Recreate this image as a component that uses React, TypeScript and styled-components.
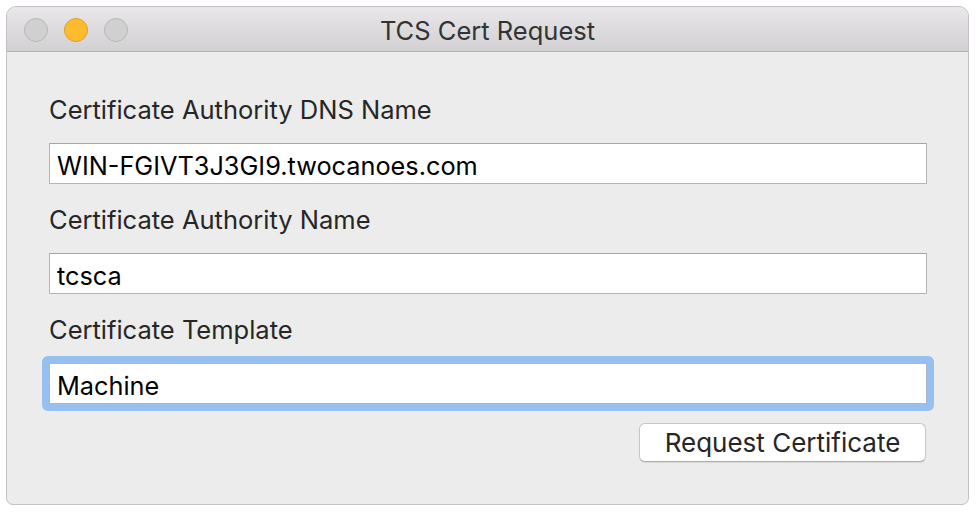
import React from "react";
import styled, { createGlobalStyle } from "styled-components";

const GlobalStyle = createGlobalStyle`
  html, body {
    margin: 0;
    padding: 0;
    background: #ffffff;
  }
  body {
    font-family: Inter, "Liberation Sans", sans-serif;
    -webkit-font-smoothing: antialiased;
  }
`;

interface FieldProps {
  label: string;
  value: string;
  focused?: boolean;
}

const Field: React.FC<FieldProps> = ({ label, value, focused }) => (
  <FieldGroup>
    <Label>{label}</Label>
    <FocusRing $focused={!!focused}>
      <TextInput defaultValue={value} $focused={!!focused} />
    </FocusRing>
  </FieldGroup>
);

export default function App() {
  return (
    <>
      <GlobalStyle />
      <Page>
        <Window>
          <TitleBar>
            <Lights>
              <Light $color="idle" />
              <Light $color="yellow" />
              <Light $color="idle" />
            </Lights>
            <Title>TCS Cert Request</Title>
          </TitleBar>

          <Content>
            <Field label="Certificate Authority DNS Name" value="WIN-FGIVT3J3GI9.twocanoes.com" />
            <Field label="Certificate Authority Name" value="tcsca" />
            <Field label="Certificate Template" value="Machine" focused />

            <ButtonRow>
              <PushButton>Request Certificate</PushButton>
            </ButtonRow>
          </Content>
        </Window>
      </Page>
    </>
  );
}

const Page = styled.div`
  width: 976px;
  height: 512px;
  padding: 6px 0 0 6px;
  box-sizing: border-box;
`;

const Window = styled.div`
  width: 963px;
  height: 499px;
  box-sizing: border-box;
  border: 1px solid #c2c2c2;
  border-radius: 10px 10px 7px 7px;
  background: #ececec;
  overflow: hidden;
  display: flex;
  flex-direction: column;
`;

const TitleBar = styled.div`
  position: relative;
  height: 44px;
  flex-shrink: 0;
  display: flex;
  align-items: center;
  justify-content: center;
  background: linear-gradient(#e9e7e9, #d2d0d2);
  border-bottom: 1px solid #b1b1b1;
`;

const Lights = styled.div`
  position: absolute;
  left: 17px;
  top: 11px;
  display: flex;
  gap: 16px;
`;

const Light = styled.span<{ $color: "idle" | "yellow" }>`
  width: 24px;
  height: 24px;
  border-radius: 50%;
  box-sizing: border-box;
  background: ${({ $color }) => ($color === "yellow" ? "#fdbb2e" : "#d1d0d1")};
  border: 1px solid ${({ $color }) => ($color === "yellow" ? "#dfa02a" : "#b8b7b8")};
`;

const Title = styled.div`
  font-size: 25.5px;
  color: #333333;
  margin-top: 2px;
`;

const Content = styled.div`
  display: flex;
  flex-direction: column;
  padding: 43px 41px 0 42px;
`;

const FieldGroup = styled.div`
  display: flex;
  flex-direction: column;
  margin-bottom: 21px;
`;

const Label = styled.div`
  font-size: 25.5px;
  line-height: 30px;
  color: #262626;
  margin-bottom: 18px;
`;

const FocusRing = styled.div<{ $focused: boolean }>`
  margin: ${({ $focused }) => ($focused ? "-7px" : "0")};
  padding: ${({ $focused }) => ($focused ? "7px" : "0")};
  border-radius: 6px;
  background: ${({ $focused }) => ($focused ? "#96c0f0" : "transparent")};
`;

const TextInput = styled.input<{ $focused: boolean }>`
  display: block;
  width: 100%;
  height: 41px;
  box-sizing: border-box;
  border: 1px solid ${({ $focused }) => ($focused ? "#a7b8cc" : "#b4b4b4")};
  border-top-color: ${({ $focused }) => ($focused ? "#a7b8cc" : "#a6a6a6")};
  background: #ffffff;
  padding: 4px 7px 0;
  font-family: Inter, "Liberation Sans", sans-serif;
  font-size: 25.3px;
  color: #000000;
  outline: none;
`;

const ButtonRow = styled.div`
  display: flex;
  justify-content: flex-end;
  margin-top: -2px;
  padding-right: 1px;
`;

const PushButton = styled.button`
  width: 287px;
  height: 39px;
  box-sizing: border-box;
  border: 1px solid #c6c6c6;
  border-bottom-color: #adadad;
  border-radius: 6px;
  background: #ffffff;
  box-shadow: 0 1px 1px rgba(0, 0, 0, 0.08);
  font-family: Inter, "Liberation Sans", sans-serif;
  font-size: 26px;
  color: #262626;
  padding: 0;
`;
